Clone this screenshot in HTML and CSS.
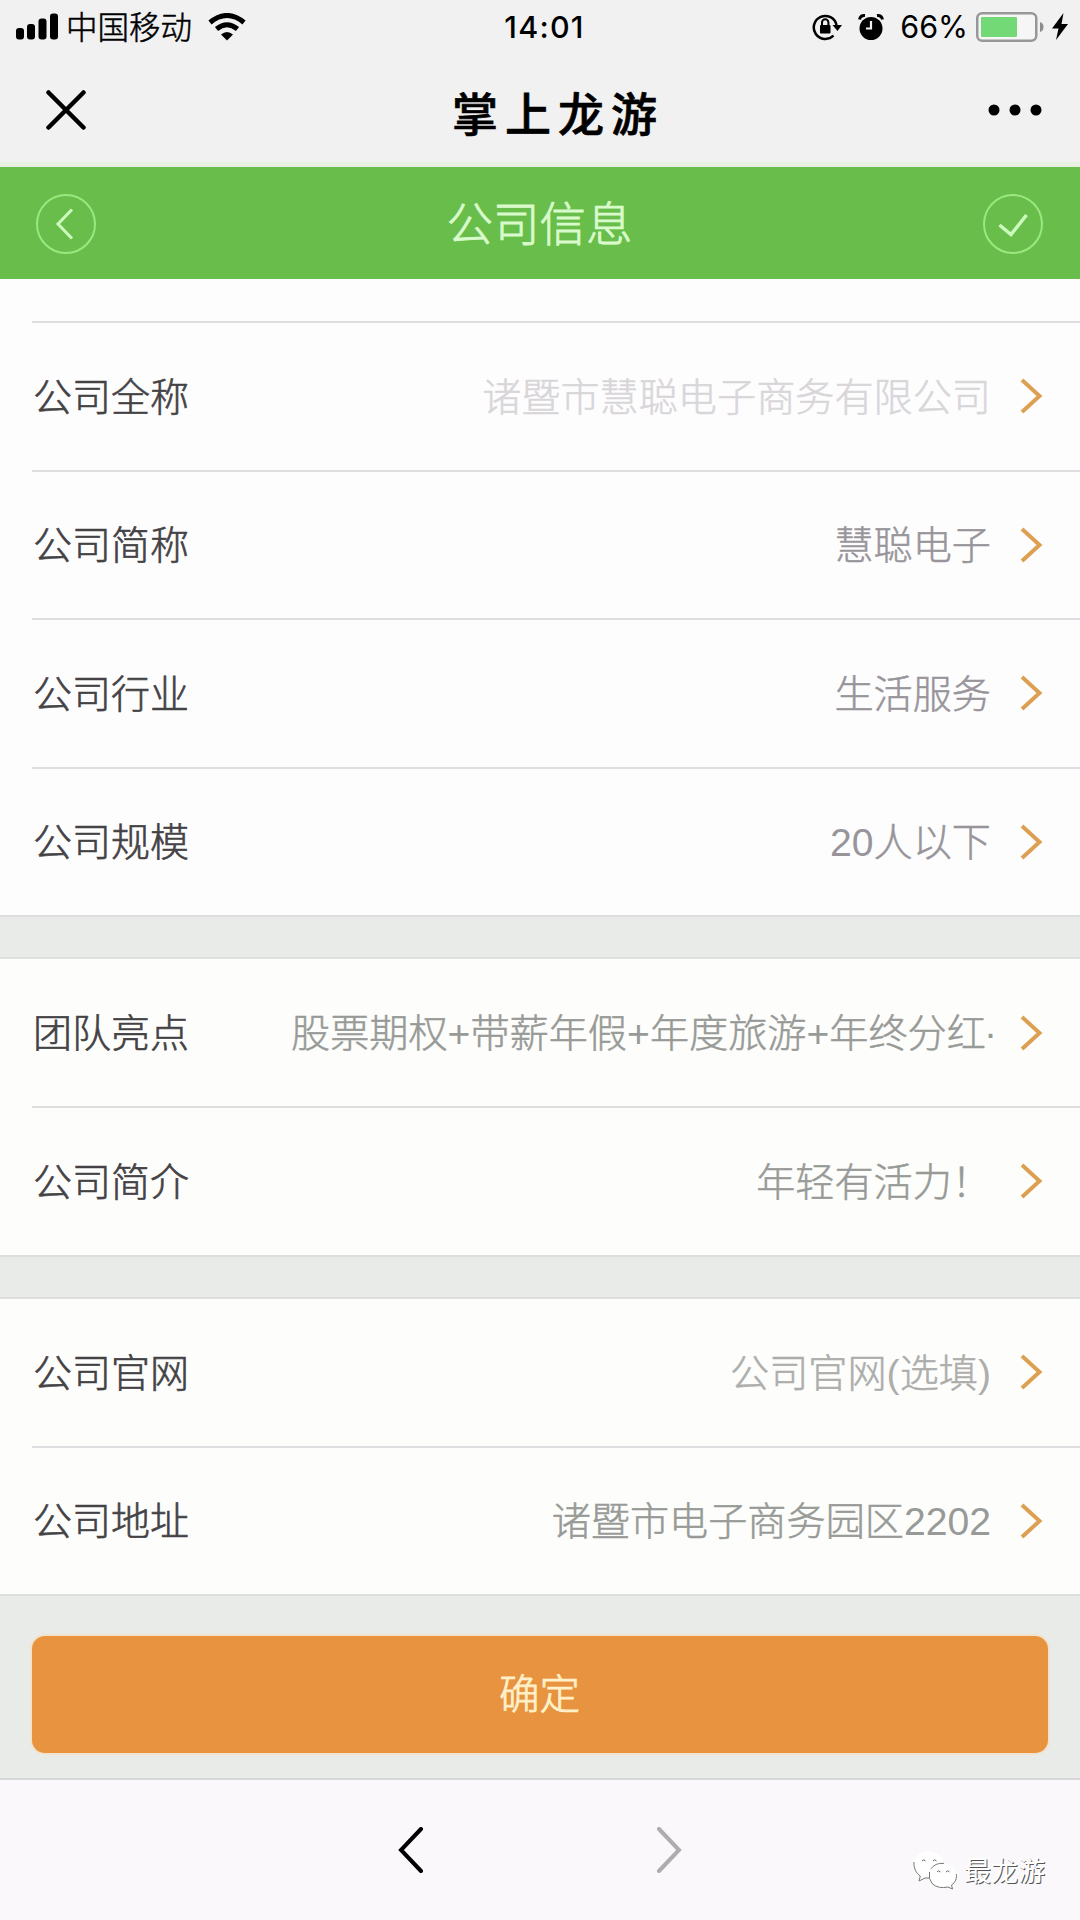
FILE: index.html
```html
<!DOCTYPE html>
<html lang="zh-CN">
<head>
<meta charset="utf-8">
<title>掌上龙游</title>
<link rel="stylesheet" href="styles.css">
</head>
<body>
<svg class="defs" width="0" height="0">
  <symbol id="chevron" viewBox="0 0 24 38"><path d="M3 3 20.500 19 3 35" fill="none" stroke="currentColor" stroke-width="4"/></symbol>
</svg>
<div class="screen">
  <header class="top">
    <div class="status">
      <div class="status-left">
        <svg width="42" height="28" viewBox="0 0 42 28"><rect x="0" y="15" width="8" height="11.500" rx="3"/><rect x="11" y="11" width="8" height="15.500" rx="3"/><rect x="22.500" y="5.500" width="8" height="21" rx="3"/><rect x="34" y="0.500" width="8" height="26" rx="3"/></svg>
        <span class="carrier">中国移动</span>
        <svg class="wifi" width="38" height="28" viewBox="0 0 38 28"><g fill="none" stroke="#000" stroke-width="5"><path d="M2 9.500Q19-4.500 36 9.500"/><path d="M8.500 16Q19 7.500 29.500 16"/></g><path d="M13 21.500Q19 16.500 25 21.500L19 27.500Z"/></svg>
      </div>
      <span class="time">14:01</span>
      <div class="status-right">
        <svg width="30" height="28" viewBox="0 0 30 28"><path d="M21.500 22.500A11.500 11.500 0 1 1 24.500 12" fill="none" stroke="#000" stroke-width="2.500"/><path d="M20.500 12H30L25.500 18Z"/><rect x="8" y="12" width="10.500" height="8.500" rx="1"/><path d="M10 12V9.500a3.200 3.200 0 0 1 6.400 0V12" fill="none" stroke="#000" stroke-width="2"/></svg>
        <svg class="alarm" width="26" height="28" viewBox="0 0 26 28"><circle cx="13" cy="15.500" r="11.500"/><path d="M13 8V15.500H8" fill="none" stroke="#f1f1f1" stroke-width="2.200"/><path d="M1.500 6.500Q2.500 2 7 2.500M24.500 6.500Q23.500 2 19 2.500" fill="none" stroke="#000" stroke-width="3"/></svg>
        <span class="percent">66%</span>
        <svg class="battery" width="68" height="30" viewBox="0 0 68 30"><rect x="1.250" y="1.250" width="59" height="27.500" rx="5" fill="#f6f6f6" stroke="#979797" stroke-width="2.500"/><rect x="5" y="5" width="36" height="20" rx="1" fill="#73d977"/><path d="M64 10q3.500 1 3.500 5t-3.500 5z" fill="#8d8d8d"/></svg>
        <svg class="bolt" width="16" height="28" viewBox="0 0 16 28"><path d="M11.500 0 0 15.500H6.500L4 27 16 11H9.500Z"/></svg>
      </div>
    </div>
    <div class="navbar">
      <svg width="40" height="40" viewBox="0 0 40 40"><path d="M2.500 2.500l35 35M37.500 2.500l-35 35" stroke="#000" stroke-width="4.500" stroke-linecap="round"/></svg>
      <h1>掌上龙游</h1>
      <svg width="54" height="12" viewBox="0 0 54 12"><circle cx="6" cy="6" r="5.500"/><circle cx="27" cy="6" r="5.500"/><circle cx="48" cy="6" r="5.500"/></svg>
    </div>
  </header>

  <div class="titlebar">
    <svg width="60" height="60" viewBox="0 0 60 60" fill="none"><circle cx="30" cy="30" r="29" stroke="#9be881" stroke-width="2"/><path d="M36 15.500 22 30 36 44.500" stroke="#cdfbbb" stroke-width="3"/></svg>
    <h2>公司信息</h2>
    <svg width="60" height="60" viewBox="0 0 60 60" fill="none"><circle cx="30" cy="30" r="29" stroke="#9be881" stroke-width="2"/><path d="M16.500 31 28 40.500 43.500 21" stroke="#cdfbbb" stroke-width="3.500"/></svg>
  </div>

  <main>
    <section class="group first">
      <div class="row"><label>公司全称</label><span class="value locked">诸暨市慧聪电子商务有限公司</span><svg class="arrow"><use href="#chevron"/></svg></div>
      <div class="row"><label>公司简称</label><span class="value">慧聪电子</span><svg class="arrow"><use href="#chevron"/></svg></div>
      <div class="row"><label>公司行业</label><span class="value">生活服务</span><svg class="arrow"><use href="#chevron"/></svg></div>
      <div class="row"><label>公司规模</label><span class="value"><span class="latin">20</span>人以下</span><svg class="arrow"><use href="#chevron"/></svg></div>
    </section>
    <section class="group">
      <div class="row"><label>团队亮点</label><span class="value long">股票期权<span class="latin">+</span>带薪年假<span class="latin">+</span>年度旅游<span class="latin">+</span>年终分红<span class="latin dot">·</span></span><svg class="arrow"><use href="#chevron"/></svg></div>
      <div class="row"><label>公司简介</label><span class="value">年轻有活力！</span><svg class="arrow"><use href="#chevron"/></svg></div>
    </section>
    <section class="group">
      <div class="row"><label>公司官网</label><span class="value hint">公司官网<span class="latin">(</span>选填<span class="latin">)</span></span><svg class="arrow"><use href="#chevron"/></svg></div>
      <div class="row"><label>公司地址</label><span class="value">诸暨市电子商务园区<span class="latin">2202</span></span><svg class="arrow"><use href="#chevron"/></svg></div>
    </section>
    <button class="confirm" type="button">确定</button>
  </main>

  <footer class="toolbar">
    <svg width="26" height="46" viewBox="0 0 26 46"><path d="M23 2 3 23 23 44" fill="none" stroke="#000" stroke-width="4" stroke-linecap="round"/></svg>
    <svg width="26" height="46" viewBox="0 0 26 46"><path d="M3 2 23 23 3 44" fill="none" stroke="#adadad" stroke-width="4" stroke-linecap="round"/></svg>
    <div class="watermark">
      <svg width="44" height="40" viewBox="0 0 44 40" fill="#fff"><path d="M15.500 1C7 1 .8 7 .8 14.500c0 5 2.700 9 6.500 11.500L6 31l6-3 5 .5C14 20 21 12.500 31 13 29.500 6 23 1 15.500 1Z"/><path d="M1 12C.5 18 3 23 7.300 26L6 31l6-3h4M31 13.300q-9-.5-13 5.500" fill="none" stroke="#777"/><path d="M29.500 14C22 14 16 19 16 26s6 12 13.500 12q3 0 5.500-1l4.500 2-1-4c3.500-2 5-5.500 5-9 0-7-6-12-14-12Z"/><path d="M16.500 22q-1.500 7 3 12 6 5 15.500 3l4.500 2-1-4c4-2.500 5.500-7 4.800-11" fill="none" stroke="#777"/><path d="M9 11q1.700-2.500 3.500 0M20 11q1.700-2.500 3.500 0M24 22q1.700-2.500 3.500 0M33 22q1.700-2.500 3.500 0" fill="none" stroke="#666"/></svg>
      <span>最龙游</span>
    </div>
  </footer>
</div>
</body>
</html>
```
FILE: styles.css
```css
* { box-sizing: border-box; }
body { margin: 0; font-family: "Liberation Sans", "Noto Sans CJK SC", sans-serif; }
svg { display: block; flex: none; }
.defs { position: absolute; }
h1, h2 { margin: 0; font-weight: 400; white-space: nowrap; }

.screen { width: 1080px; height: 1920px; display: flex; flex-direction: column; overflow: hidden; }

.top { height: 167px; background: #f1f1f1; border-bottom: 5px solid #e8f0e2; }
.status { height: 54px; padding: 0 12px 0 16px; display: grid; grid-template-columns: 1fr auto 1fr; align-items: center; }
.status-left, .status-right { display: flex; align-items: center; }
.status-right { justify-content: flex-end; }
.carrier { margin-left: 8px; padding-top: 2px; font-size: 31.500px; line-height: 52px; font-weight: 300; -webkit-text-stroke: .5px; }
.wifi { margin-left: 16px; }
.time { padding-left: 5px; font: 500 30.500px/54px Inter, sans-serif; letter-spacing: 1.200px; }
.alarm { margin-left: 16px; }
.percent { margin: 0 8px 0 16px; font: 400 30.500px/54px Inter, sans-serif; }
.bolt { margin-left: 8px; }
.navbar { height: 112px; padding: 0 38px 0 46px; display: flex; align-items: center; }
.navbar h1 { margin: 9px auto 0 366px; font-size: 46px; font-weight: 500; letter-spacing: 7px; line-height: 60px; -webkit-text-stroke: .7px; }

.titlebar { height: 112px; padding: 1px 37px 0 36px; display: flex; align-items: center; justify-content: space-between; background: #68bd4b; }
.titlebar h2 { padding-top: 3px; color: #d9fbcb; font-size: 46.500px; font-weight: 300; line-height: 60px; -webkit-text-stroke: .8px; }

main { height: 1499px; background: #e9ebe8; display: flex; flex-direction: column; gap: 40px; }
.group { background: #fdfefc; border-top: 2px solid #dfe0de; border-bottom: 2px solid #dcdddc; }
.group.first { background: #fefdfe; border-top: 0; padding-top: 42px; }
.row { height: 148.500px; margin-left: 32px; padding-right: 37px; border-top: 2px solid #dedddf; display: flex; align-items: center; }
.group:not(.first) .row:first-child { height: 147px; border-top: 0; }
.row label { padding: 3px 0 0 1px; color: #444245; font-size: 39px; line-height: 60px; font-weight: 300; -webkit-text-stroke: .6px; }
.value { margin-left: auto; padding-top: 3px; color: #989a97; font-size: 39.150px; line-height: 60px; font-weight: 300; white-space: nowrap; -webkit-text-stroke: .5px; }
.first .value { color: #97959a; }
.latin { -webkit-text-stroke: 0; }
.dot { margin: 0 -2px; }
.first .value.locked { color: #d9d6da; }
.value.hint { color: #adaeac; }
.value.long { width: 700px; }
.arrow { width: 24px; height: 38px; margin-left: 28px; color: #dda052; }
.confirm { margin: 0 32px; height: 117px; padding: 0 1px 5px 0; border: 0; border-radius: 13px; background: #e79340; color: #fff0c8; font: 300 40.500px/112px "Noto Sans CJK SC", sans-serif; -webkit-text-stroke: .8px; box-shadow: 0 0 0 2px #f2e3cd; }

.toolbar { flex: 1; position: relative; background: #faf8fb; border-top: 2px solid #d7d6d9; display: flex; justify-content: center; gap: 232px; padding-top: 47px; }
.watermark { position: absolute; left: 913px; top: 67px; display: flex; align-items: center; gap: 7px; color: #fff; font-size: 27px; line-height: 40px; font-weight: 400; text-shadow: 1px 1px 0 #555; }
.watermark span { padding-top: 5px; }
```
